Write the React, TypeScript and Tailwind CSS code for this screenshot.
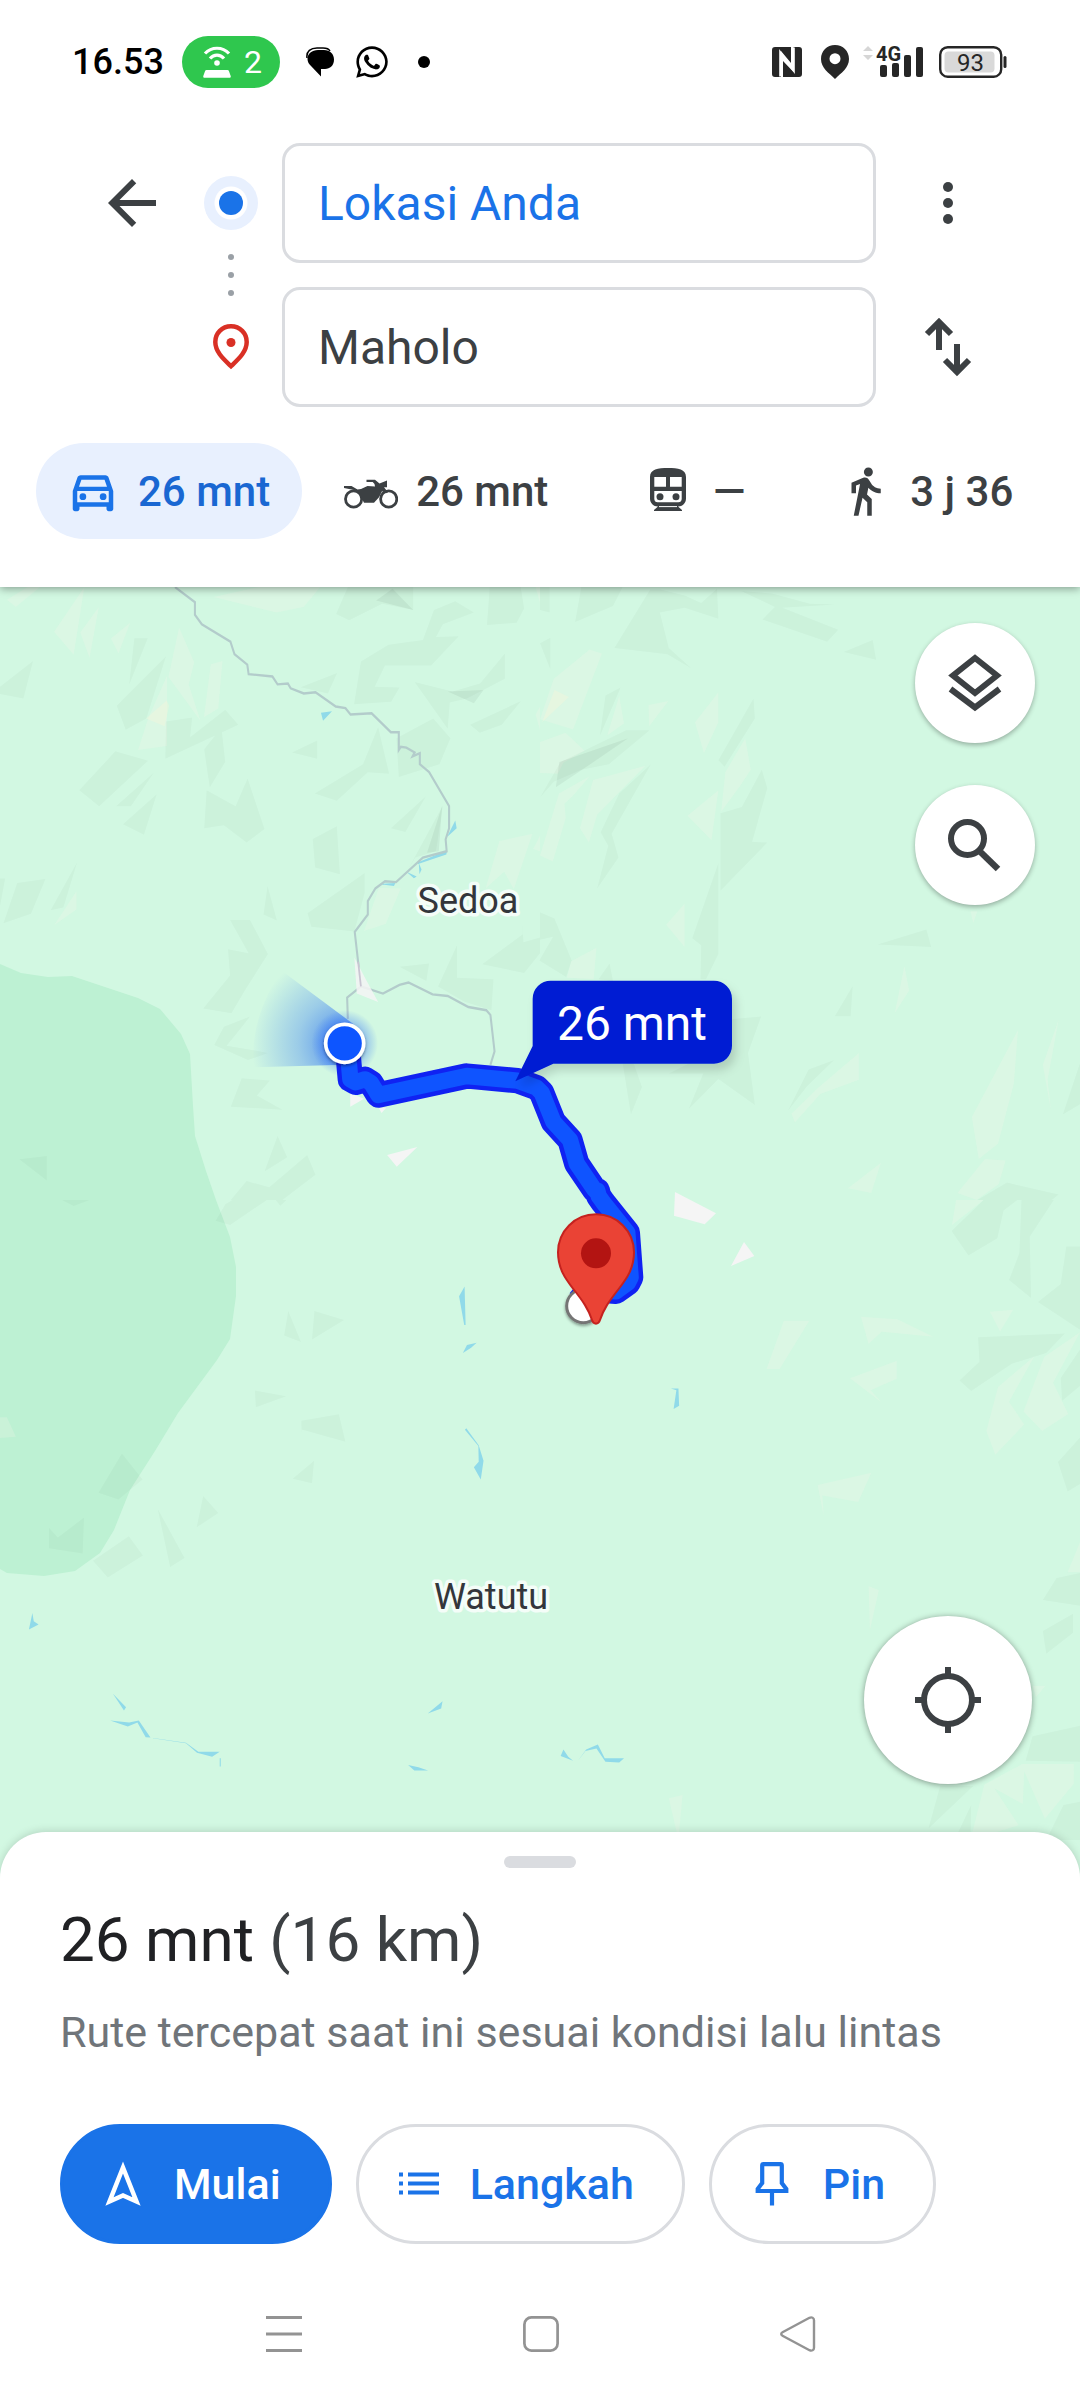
import type { ReactNode } from 'react';
import { MdArrowBack, MdDirectionsWalk, MdOutlineDirectionsCar } from 'react-icons/md';
import { FaWhatsapp } from 'react-icons/fa';

/* ---------- status bar ---------- */

function StatusBar() {
  return (
    <div className="flex h-[124px] items-center justify-between pl-[72px] pr-[73px] text-black">
      <div className="flex items-center">
        <span className="w-[110px] text-[36px] font-medium leading-[52px]">16.53</span>
        <div className="flex h-[52px] items-center gap-3 rounded-full bg-[#2fc74e] pl-5 pr-[18px] text-white">
          <svg width="30" height="32" viewBox="0 0 30 32" fill="none" aria-hidden="true">
            <path d="M3 7.5C9.500.5 20.500.5 27 7.500M8 12.500C12 8 18 8 22 12.500" stroke="#fff" strokeWidth="3.200" />
            <circle cx="15" cy="17" r="2.800" fill="#fff" />
            <path d="M4.500 24h21c.7 0 1.200.4 1.400 1l1.800 5c.3.900-.2 1.800-1.200 1.800H2.500c-1 0-1.500-.9-1.200-1.800l1.800-5c.2-.6.700-1 1.400-1z" fill="#fff" />
          </svg>
          <span className="text-[32px] leading-[52px]">2</span>
        </div>
        <svg width="28" height="30" viewBox="0 0 28 30" className="ml-[26px]" aria-hidden="true">
          <path d="M1 11C0 4 5 1 11 1h6c3 0 6 1 7 3" fill="none" stroke="#000" strokeWidth="1.500" />
          <path d="M12 3h6c6 0 10 4 10 9.500 0 6-4 9.500-9 9.500h-4v7.500L5 19c-2-2-3.500-4-3.500-7C1.500 6.500 6 3 12 3z" />
        </svg>
        <FaWhatsapp className="ml-5 size-[36px]" aria-hidden="true" />
        <span className="ml-7 size-3 rounded-full bg-black" />
      </div>
      <div className="flex items-center">
        <svg width="30" height="30" viewBox="0 0 30 30" fill="#262626" aria-hidden="true">
          <path d="M3 0h16v16L9 4v26H3a3 3 0 0 1-3-3V3a3 3 0 0 1 3-3z" />
          <path d="M21.500 0H27a3 3 0 0 1 3 3v24a3 3 0 0 1-3 3H11V14l10.500 11z" />
          <path d="M8.200 29.500V5L21.800 24V.5" fill="none" stroke="#fff" strokeWidth="2" />
        </svg>
        <svg width="28" height="34" viewBox="0 0 28 34" className="ml-[19px]" fill="#262626" aria-hidden="true">
          <path d="M14 0c8 0 14 6 14 14 0 9-8 14-14 20C8 28 0 23 0 14 0 6 6 0 14 0zm0 8.200a5.500 5.500 0 1 0 0 11 5.500 5.500 0 0 0 0-11z" />
        </svg>
        <svg width="62" height="42" viewBox="0 -4 62 42" className="ml-[13px]" fill="#262626" aria-hidden="true">
          <path d="M1 6 6 1l5 5zM1 10h10l-5 5z" fill="#d6d6d6" />
          <text x="14" y="16" fontSize="20" fontWeight="700" fontFamily="Roboto, sans-serif">4G</text>
          <rect x="18" y="20" width="7" height="12" rx="2" />
          <rect x="30" y="18" width="7" height="14" rx="2" />
          <rect x="42" y="10" width="7" height="22" rx="2" />
          <rect x="54" y="2" width="7" height="30" rx="2" />
        </svg>
        <svg width="68" height="32" viewBox="0 0 68 32" className="ml-[15px]" aria-hidden="true">
          <rect x="1.200" y="1.200" width="61" height="29.500" rx="7.500" fill="#fff" stroke="#262626" strokeWidth="2.400" />
          <rect x="5.500" y="5.500" width="50" height="21" rx="4" fill="#d9d9d9" />
          <rect x="64.500" y="10" width="3" height="12" rx="1.500" fill="#262626" />
          <text x="31.500" y="24.500" textAnchor="middle" fontSize="24" fill="#262626" fontFamily="Roboto, sans-serif">93</text>
        </svg>
      </div>
    </div>
  );
}

/* ---------- directions header ---------- */

function StopMarkers() {
  return (
    <svg width="54" height="264" viewBox="0 0 54 264" aria-hidden="true">
      <circle cx="27" cy="60" r="27" fill="#e8f0fe" />
      <circle cx="27" cy="60" r="16.500" fill="#fff" />
      <circle cx="27" cy="60" r="12" fill="#1a73e8" />
      <g fill="#9aa0a6">
        <circle cx="27" cy="114" r="3" />
        <circle cx="27" cy="132" r="3" />
        <circle cx="27" cy="150" r="3" />
      </g>
      <path
        d="M27 183.300c-9 0-15.700 7-15.700 15.700 0 10 8.700 17.500 15.700 24.200 7-6.700 15.700-14.200 15.700-24.200 0-8.700-6.700-15.700-15.700-15.700z"
        fill="none"
        stroke="#d93025"
        strokeWidth="4.500"
      />
      <circle cx="27" cy="199.500" r="4.500" fill="#d93025" />
    </svg>
  );
}

function StopField({ label, value, color }: { label: string; value: string; color: string }) {
  return (
    <input
      type="text"
      aria-label={label}
      defaultValue={value}
      className={`h-[120px] w-full rounded-[18px] border-[3px] border-[#dadce0] bg-white px-[33px] text-[48px] outline-none focus:border-[#1a73e8] ${color}`}
    />
  );
}

function MotorcycleIcon() {
  return (
    <svg width="54" height="54" viewBox="0 0 54 54" fill="currentColor" aria-hidden="true">
      <g fill="none" stroke="currentColor" strokeWidth="2.800">
        <circle cx="9.600" cy="35" r="8.100" />
        <circle cx="44.700" cy="35" r="8.100" />
      </g>
      <path d="M0 22h7.500l6 3.500 3.500-.5 6.500-3L31 22.500l-.5-2.500-1.800-2H22.500v-2.300H31l4.500 3.800 7.500-3v6.800h-3l4 5-2 1-4-2-3 6-5 5.400H20L18.500 36 15 29.500 10 26l-10-2z" />
    </svg>
  );
}

function TrainIcon() {
  return (
    <svg width="54" height="54" viewBox="0 0 54 54" fill="currentColor" aria-hidden="true">
      <path
        fillRule="evenodd"
        d="M27 4C17 4 9 5.200 9 13v21.500c0 4.500 3.500 8 8 8l-4 3.500v1h28v-1l-4-3.500c4.500 0 8-3.500 8-8V13c0-7.800-8-9-18-9zM13.300 13H25v9.800H13.300zM29 13h11.700v9.800H29zM13.300 27h27.400v8c0 2-1.500 3.300-3.300 3.300H16.600c-1.800 0-3.300-1.300-3.300-3.300z"
      />
      <circle cx="19" cy="32.700" r="3.500" />
      <circle cx="35" cy="32.700" r="3.500" />
      <path d="M18 42.600h18" stroke="#fff" strokeWidth="1" />
    </svg>
  );
}

const travelModes: { name: string; icon: ReactNode; time: string; style: string }[] = [
  {
    name: 'Mobil',
    icon: <MdOutlineDirectionsCar className="size-[54px] text-[#1a73e8]" />,
    time: '26 mnt',
    style: 'bg-[#e8f0fe] text-[#1967d2]',
  },
  { name: 'Motor', icon: <MotorcycleIcon />, time: '26 mnt', style: 'text-[#3c4043]' },
  { name: 'Transportasi umum', icon: <TrainIcon />, time: '—', style: 'min-w-[204px] justify-center text-[#3c4043]' },
  { name: 'Jalan kaki', icon: <MdDirectionsWalk className="size-[54px]" />, time: '3 j 36', style: 'text-[#3c4043]' },
];

function DirectionsHeader() {
  return (
    <header className="relative z-10 bg-white pb-12 shadow-[0_2px_8px_rgba(0,0,0,0.35)]">
      <StatusBar />
      <div className="mt-[19px] flex px-24">
        <button aria-label="Kembali" className="flex h-[120px] w-[72px] items-center justify-center text-[#3c4043]">
          <MdArrowBack className="size-[72px]" />
        </button>
        <div className="ml-9">
          <StopMarkers />
        </div>
        <div className="ml-6 flex flex-1 flex-col gap-6">
          <StopField label="Titik awal" value="Lokasi Anda" color="text-[#1a73e8]" />
          <StopField label="Tujuan" value="Maholo" color="text-[#3c4043]" />
        </div>
        <div className="ml-9 flex flex-col gap-6 text-[#3c4043]">
          <button aria-label="Opsi lainnya" className="flex h-[120px] w-[72px] items-center justify-center">
            <svg width="72" height="72" viewBox="0 0 72 72" fill="currentColor">
              <circle cx="36" cy="20" r="5" />
              <circle cx="36" cy="36" r="5" />
              <circle cx="36" cy="52" r="5" />
            </svg>
          </button>
          <button aria-label="Tukar titik awal dan tujuan" className="flex h-[120px] w-[72px] items-center justify-center">
            <svg width="72" height="72" viewBox="0 0 72 72" fill="none" stroke="currentColor" strokeWidth="6">
              <path d="M27 39V10M15 23l12-12 12 12M45 33v29M33 49l12 12 12-12" />
            </svg>
          </button>
        </div>
      </div>
      <nav className="mt-9 flex gap-3 px-9" aria-label="Moda perjalanan">
        {travelModes.map((mode) => (
          <button
            key={mode.name}
            aria-label={`${mode.name} ${mode.time}`}
            className={`flex h-24 items-center gap-[18px] whitespace-nowrap rounded-full pl-[30px] pr-8 text-[42px] font-medium ${mode.style}`}
          >
            {mode.icon}
            <span>{mode.time}</span>
          </button>
        ))}
      </nav>
    </header>
  );
}

/* ---------- map ---------- */

interface Tile {
  transform: string;
  shade: string;
  light: string;
  water: string;
}

// Terrain is stored per tile, in tile units
const tiles: Tile[] = [
  {
    transform: 'translate(0 580) scale(.34439 .39541)',
    shade:
      'M0 270 96 205 68 300 0 288zM390 147h39l-54 118zM339 318 482 193 425 350 365 379zM482 358l76-10-6 50 102-70 38 38-212 86zM593 428l50-55 11 87-45 65zM230 532 335 433l95 24-142 115zM337 572 447 487 380 572zM357 618l98-76-37 102zM600 532l84 40 35-70 49 128-52 34-66-44-57 8zM873 271l106-36-27 52zM848 436l73-30v46zM914 540l140-74 44-94 32 118-62-4-90 72zM908 655l70-32 9 121-72-17zM1135 628l102-81-60 90zM893 843l166-102v50l-30 98-125-12zM1180 740l106-170-20 116-60 16zM1151 400l107-50 50 50-32 66-118 32zM1048 206l80-42 100-12 32-76 62-22 54 28-90 30-20 32 66-2-80 74h-134l-30 54 72 2-24 36-108 6zM1204 258l110 24 80-20 72-76v64l-110 50-50 10-6 66zM1365 366l148-60-56 60-64 20zM1010 18h190v58l-90-16-96 42-38-16zM1422 18h90l10 54-22 36-86 6zM10 868l40-102 82-10-42 88zM147 835l77-121-40 114zM0 755l15 0-15 70zM765 846l12-72 27 87zM668 860h58l52 86-64 88-42 62-82-12 78-84-6-66 60 10zM650 1130l76-26-40 44-28 30 70 10 50 8-58 18-98-38zM702 1260l82 6-38 38 74 36-150-8zM768 1496l38-90 28 54zM670 1568l46-48 66 16 110-82 24 50-96 64zM1160 978l86-8-8 44zM1272 1028l55-104v82l106 4-6 78-80-22zM1400 972l118-76-6-90 8 110 48-12v-70 110l-46 50z',
    light:
      'M157 131 245 18 214 189zM233 133 287 68 260 197zM322 148l56-40-34 78zM489 245l31-125 44 88-16 56 34 92zM430 350l55-108v178l-84 10zM612 213l34-8-12 120-42 22zM20 50l60-32h36l-70 50zM620 43l130-25h180l-48 50-80 14zM157 873l65-86v46zM1057 888l43-110 64 2-44 90zM1410 780l40-120 96-18-54 140-28-44zM1548 680l20-34v40zM1555 18h13v40zM1555 340l13-20v60z',
    water:
      'M932 336l32-4-26 24zM1298 650l24-42 4 20zM1214 714l84-30-2 10-82 24zM1180 738l30 12-8 4zM1216 716l8 16-6 12zM1086 796l26-28 36-2-4 8-34-4z',
  },
  {
    transform: 'translate(540 580) scale(.34439 .39541)',
    shade:
      'M0 18h28v64L0 76zM120 18h120l-28 48-110 40zM320 24h30l72 16 46 18 46-36 4 76-98-28-72 12 26 90 66 52-70-36-154-16zM584 28l90 6 110 26 74 2-154 8 162 56-32 30-188-56 36-32zM882 182l84-30 10 50zM190 292l44-20-60 122zM0 550 60 460 250 380l68 0-118 86-80 14-80 30zM322 466l-114 176 20 60-62 78 32-108-22-34 54-98zM518 456l102-156 4 50-88 122zM524 590l62-16 58-94 16 46-44 136 44 2-136 122zM518 716v230l-36 64h-16l2-86-26-18zM0 840l42 16 50 106-16 42-78-42 40-60-38 8zM170 1010l32-40 10 44zM980 922l142-38 14 44zM856 1103l52-76-6 76zM560 1110l82-6-38 92 20 132-106-66-86 76 42-90h-100l60-26zM240 1222h32l24 60-32 70zM720 1342l60-104 74-24-78 66zM1518 1352l50-130v104zM1270 1568l86-44 150 30-20 14zM0 160l30-14v80z',
    light:
      'M40 250l104-74 36 10-84 192-96-26zM195 393l35-100 14 70zM315 316l58-10-56 64zM450 360l68-76v76l-42 78zM0 410l74-24 56 46-62 30-16 28-52-2zM55 540l90-44-50 50-24 20 4 36-38 110-37-15zM154 506l152-36-140 124-24 70-26-36zM526 586l12-100 58-86 16 80-30 40zM428 596l90-64-20 126zM366 872l54-54v110zM90 964l74-34-8 80-78-4zM1030 1096l28-120 14 62zM1250 838h20l-12 30zM730 1350l80-68 116-86v68l-112 36-74 72zM1254 1358l134-220-12 136-46 152-56 38zM1460 1226l46-114-32 152 10 80zM894 1538l96-64-28 76zM1212 1550l80-86 60 4-20 60-64 40z',
    water: '',
  },
  {
    transform: 'translate(0 1200) scale(.34439 .40816)',
    shade:
      'M180 0h80l-46 15zM655 10l20-10h100L668 61l-42-10zM800 0h32l-18 14zM825 332l12-60 37 76zM913 272l86 22-93 48zM740 467l91 14-88 27zM875 541l109-16 19 67-127-30v24zM850 683l62-44-6 55zM571 802l19-77 44 42zM458 757l78 120-42 22zM286 717l68-96 60 64-70 49zM142 803l26 24 76-49-4 88-98-13zM270 884l104-60 41 47-102 54zM56-100l80-8v60z',
    light: 'M0 532h20l26 48-46 3z',
    water:
      'M1333 236l16-24 3 94h-4zM1344 375l12-20 28-5-16 12zM1350 563l4-4 36 42 14 38-8 46-20-30 14-14-1-38zM84 1052l10-40 4 20 14 8zM328 1210l38 33-6 8zM320 1275l55 5 28-5 34 42-14-1-24-36-28 10zM444 1318l96 12 36 22h62l-22 12-44-10-32-23-96-12zM638 1368h3v20h-3zM1242 1258l43-30-4 18zM1185 1384l30 6 28 8h-40z',
  },
  {
    transform: 'translate(540 1200) scale(.34439 .40816)',
    shade:
      'M1195 76 1288 0h98l-40 26-18 68-84 42zM1398 0h94l-70 90 4 150-64-44 30-66zM1446 250l66-44 16-92h40v204zM1272 336l252-9-54 48-100 26-118 67-34-26 58-46zM1512 436l56-70v90l-52 36zM1504 642l64-60v114l-36 18zM1460 980l40-54 68-12v80zM1460 1056l88-42v46l-78 52zM1410 1374l20-60 138-26v88zM1128 1540l34-104h96zM1208 1560l44-78-2 86h-50zM1470 1568l50-86 48-8v94z',
    light:
      'M1196 62l12-62h80zM658 414l50-118h74l-86 118zM932 286l106 6 104 43-150-12-38 30zM900 437l136-43v44l-76 28 32 30zM1306 274l68-5-38 53zM1296 566l34-108 106-76-74 112 44 56-84 74zM1404 518l60-134 104-60-78 124 44 76-76 42zM806 698l156-30-38 72-104-16 4 50zM1532 912l36-74v74zM954 946l30 10-26 98zM1430 1190h38l-28 28zM1250 1568l40-136 110-50h150v48l-84 86-60-116-4 80-82-38 70 90zM374 1466l40-8-12 110z',
    water:
      'M380 462h22l2 42-16 8 8-46zM60 1362l8-16 14 18 14 10zM108 1376l26-30 34-12 20 34 56 0-14 10-40-2-26-32-32 6z',
  },
];

const routePath =
  'M324 400 331 478 347 487 375 478 393 489 415 525 680 468 832 482 890 503 905 518 940 605 990 660 1010 730 1064 810 1072 812 1076 828 1090 848 1162 938 1172 1072 1164 1088 1128 1114 1048 1108 1018 1144';

function RouteMap() {
  return (
    <svg
      viewBox="0 587 1080 1293"
      preserveAspectRatio="xMidYMid slice"
      className="absolute inset-x-0 top-0 h-[calc(100%+48px)] w-full"
      role="img"
      aria-label="Peta rute ke Maholo"
    >
      <defs>
        <radialGradient id="beam" gradientUnits="userSpaceOnUse" cx="314" cy="370" r="280">
          <stop offset="0.2" stopColor="#2f74f0" stopOpacity="0.65" />
          <stop offset="0.5" stopColor="#4a8af0" stopOpacity="0.4" />
          <stop offset="1" stopColor="#4a8af0" stopOpacity="0" />
        </radialGradient>
        <radialGradient id="glow" gradientUnits="userSpaceOnUse" cx="314" cy="370" r="100">
          <stop offset="0.5" stopColor="#1155ff" stopOpacity="0.4" />
          <stop offset="1" stopColor="#1155ff" stopOpacity="0" />
        </radialGradient>
        <filter id="calloutShadow" x="-20%" y="-20%" width="150%" height="170%">
          <feDropShadow dx="12" dy="20" stdDeviation="14" floodColor="#000" floodOpacity="0.15" />
        </filter>
        <filter id="dotShadow" x="-30%" y="-30%" width="160%" height="170%">
          <feDropShadow dx="0" dy="5" stdDeviation="5" floodColor="#000" floodOpacity="0.4" />
        </filter>
      </defs>

      <rect y="580" width="1080" height="1310" fill="#d2f8e2" />
      <path
        d="M0 964 21 973 48 977 72 976 138 998 160 1009 181 1034 190 1054 193 1106 195 1136 206 1171 216 1200 230 1237 236 1267V1296L230 1339 217 1360 178 1413 155 1451 130 1490 114 1530 100 1553 75 1571 44 1576 7 1573 0 1569z"
        fill="#bdf1d3"
      />

      {tiles.map((tile) => (
        <g key={tile.transform} transform={tile.transform}>
          <path d={tile.light} fill="#fbf6ee" fillOpacity="0.22" />
          <path d={tile.shade} fill="#001a10" fillOpacity="0.028" />
          <path d={tile.water} fill="#90dae9" />
        </g>
      ))}

      {/* steepest slopes and one bare ridge */}
      <g transform="translate(0 580) scale(.34439 .39541)">
        <path d="M1300 282l104-4-28 34zM1092 52l48-30 60 54zM1240 690l44-120-10 116z" fill="#001a10" fillOpacity="0.05" />
        <path d="M1624 460 1824 400 1714 466 1614 524z" fill="#001a10" fillOpacity="0.05" />
        <path d="M424 350 484 305 491 318 478 370zM1574 360 1610 278 1652 296z" fill="#fff5d8" fillOpacity="0.3" />
        <path
          d="M508 18 566 56V88L586 112 669 156 681 188 718 214 722 238 791 244 806 264 836 262 844 274 882 287 916 284 975 320 1003 324 1018 340 1079 337 1135 385H1158V430L1164 422 1180 424 1204 436 1198 446 1219 438V466L1246 486 1304 572V628L1294 656 1297 686 1228 702 1150 764 1118 762 1090 780 1068 812V846L1030 890 1048 1028 1008 1056 1010 1110"
          fill="none"
          stroke="#b3cccb"
          strokeWidth="6"
        />
        <path
          d="M1048 1028 1112 1046 1160 1024 1186 1018 1256 1048 1300 1052 1360 1080 1412 1088 1424 1100 1436 1192 1424 1226"
          fill="none"
          stroke="#b3cccb"
          strokeWidth="6"
        />
        <path d="M1029 955 1062 1010 1098 1067 1036 1046z" fill="#f5f5f5" fillOpacity="0.85" />
        <path d="M1048 1028 1040 966" stroke="#c9c6d2" strokeWidth="5" />
        <path d="M1124 1454 1212 1434 1152 1484zM1017 1298v34l40-20zM1100 1336l8 12 14-14z" fill="#f5f5f5" />
      </g>

      <g transform="translate(240 920) scale(.33333)">
        <path d="M1305 816 1428 880 1394 913 1302 887zM1473 1038 1512 966 1543 1008z" fill="#f5f5f5" />
        <path d="M340 312 125 152Q30 290 40 442L314 434z" fill="url(#beam)" />
        <circle cx="314" cy="370" r="100" fill="url(#glow)" />
        <path d={routePath} fill="none" stroke="#1022f2" strokeWidth="76" strokeLinejoin="round" />
        <path d={routePath} fill="none" stroke="#0f54ff" strokeWidth="49" strokeLinejoin="round" />
        <g filter="url(#dotShadow)">
          <circle cx="314" cy="370" r="57" fill="#0f54ff" stroke="#fff" strokeWidth="11" />
          <circle cx="1030" cy="1158" r="50" fill="#fff" stroke="#757575" strokeWidth="9" />
        </g>
        <path
          d="M1068 883c-64 0-114 51-114 114 0 48 21 78 46 110 30 38 45 60 56 93 3 9 6 11 12 11s9-2 12-11c11-33 26-55 56-93 25-32 46-62 46-110 0-63-50-114-114-114z"
          fill="#ea4335"
          stroke="#c5221f"
          strokeWidth="6"
        />
        <circle cx="1068" cy="1000" r="45" fill="#b31412" />
        <path
          d="M932 182h490a54 54 0 0 1 54 54v141a54 54 0 0 1-54 54H940L826 484 878 378V236a54 54 0 0 1 54-54z"
          fill="#041fd3"
          filter="url(#calloutShadow)"
        />
      </g>
      <text x="632" y="1040" textAnchor="middle" fontSize="48" fill="#fff" fontFamily="Roboto, sans-serif">
        26 mnt
      </text>

      <g
        fontSize="36"
        fontFamily="Roboto, sans-serif"
        textAnchor="middle"
        fill="#33363b"
        stroke="#f4fdf8"
        strokeWidth="7"
        strokeLinejoin="round"
        paintOrder="stroke"
      >
        <text x="468" y="913">Sedoa</text>
        <text x="491" y="1609">Watutu</text>
      </g>
    </svg>
  );
}

function MapPanel() {
  return (
    <main className="relative flex flex-1 flex-col items-end justify-between gap-10 pb-12 pt-9">
      <RouteMap />
      <div className="relative mr-[45px] flex flex-col gap-[42px] text-[#3c4043]">
        <button
          aria-label="Lapisan peta"
          className="flex size-[120px] items-center justify-center rounded-full bg-white shadow-[0_2px_5px_rgba(0,0,0,0.3)]"
        >
          <svg width="60" height="60" viewBox="0 0 60 60" fill="none" stroke="currentColor" strokeWidth="6">
            <path d="M30 5 52 22.500 30 40 8 22.500zM5.500 36 30 54.500 54.500 36" />
          </svg>
        </button>
        <button
          aria-label="Telusuri sepanjang rute"
          className="flex size-[120px] items-center justify-center rounded-full bg-white shadow-[0_2px_5px_rgba(0,0,0,0.3)]"
        >
          <svg width="60" height="60" viewBox="0 0 60 60" fill="none" stroke="currentColor" strokeWidth="6">
            <circle cx="22.500" cy="23.500" r="16.500" />
            <path d="M35.500 37 53 54" strokeWidth="6.500" />
          </svg>
        </button>
      </div>
      <button
        aria-label="Lokasi saya"
        className="relative mr-12 flex size-[168px] items-center justify-center rounded-full bg-white text-[#3c4043] shadow-[0_1px_6px_rgba(0,0,0,0.4)]"
      >
        <svg width="66" height="66" viewBox="0 0 66 66" fill="none" stroke="currentColor" strokeWidth="6">
          <circle cx="33" cy="33" r="24" />
          <path d="M33 0v8M33 58v8M0 33h8M58 33h8" />
        </svg>
      </button>
    </main>
  );
}

/* ---------- bottom sheet ---------- */

function ActionButton({ icon, label, primary }: { icon: ReactNode; label: string; primary?: boolean }) {
  return (
    <button
      className={`flex h-[120px] items-center gap-6 rounded-full border-[3px] pl-[33px] pr-12 text-[43px] font-medium ${
        primary ? 'border-[#1a73e8] bg-[#1a73e8] text-white' : 'border-[#dadce0] bg-white text-[#1a73e8]'
      }`}
    >
      <svg width="54" height="54" viewBox="0 0 54 54" fill="none" stroke="currentColor" strokeWidth="4.500" aria-hidden="true">
        {icon}
      </svg>
      {label}
    </button>
  );
}

function RouteSheet() {
  return (
    <section className="relative z-10 rounded-t-[46px] bg-white pb-12 pt-6 shadow-[0_-1px_8px_rgba(0,0,0,0.15)]">
      <div className="mx-auto h-3 w-[72px] rounded-full bg-[#dadce0]" />
      <div className="px-[60px]">
        <h1 className="mt-9 text-[62px] leading-[72px] text-[#202124]">
          26 mnt <span className="text-[#3c4043]">(16 km)</span>
        </h1>
        <p className="mt-8 text-[43px] leading-[48px] text-[#70757a]">Rute tercepat saat ini sesuai kondisi lalu lintas</p>
        <div className="mt-[68px] flex gap-6">
          <ActionButton primary label="Mulai" icon={<path d="M27 10.500 13.500 44.500 27 38.500 40.500 44.500z" />} />
          <ActionButton
            label="Langkah"
            icon={
              <>
                <path d="M16 17.500h31M16 26.500h31M16 35.500h31" strokeWidth="4" />
                <path d="M7 17.500h4M7 26.500h4M7 35.500h4" strokeWidth="4" />
              </>
            }
          />
          <ActionButton
            label="Pin"
            icon={
              <path
                d="M18.500 7.200h17c.8 0 1.300.5 1.300 1.300V26l4.500 6v2H12.700v-2l4.500-6V8.500c0-.8.500-1.300 1.300-1.300zM27 34v14.500"
                strokeWidth="4.200"
              />
            }
          />
        </div>
      </div>
      <nav className="mt-[72px] grid grid-cols-3 justify-items-center pl-[155px] pr-[153px]" aria-label="Navigasi sistem">
        <button aria-label="Aplikasi terbaru">
          <svg width="36" height="36" viewBox="0 0 36 36" fill="none" stroke="#939393" strokeWidth="3">
            <path d="M0 1.500h36M0 18h36M0 34.500h36" />
          </svg>
        </button>
        <button aria-label="Beranda">
          <svg width="36" height="36" viewBox="0 0 36 36" fill="none" stroke="#939393" strokeWidth="2.700">
            <rect x="1.400" y="1.400" width="33.200" height="33.200" rx="7" />
          </svg>
        </button>
        <button aria-label="Kembali ke layar sebelumnya">
          <svg width="36" height="36" viewBox="0 0 36 36" fill="none" stroke="#939393" strokeWidth="2.400" strokeLinejoin="round">
            <path d="M2.500 16.300 29.500 1.800c2.200-1 4.500 0 4.500 2.500v27.400c0 2.500-2.300 3.500-4.500 2.500L2.500 19.700c-1.700-.9-1.700-2.500 0-3.400z" />
          </svg>
        </button>
      </nav>
    </section>
  );
}

export default function App() {
  return (
    <div className="flex min-h-screen flex-col overflow-x-hidden bg-white font-[Roboto,sans-serif]">
      <DirectionsHeader />
      <MapPanel />
      <RouteSheet />
    </div>
  );
}
